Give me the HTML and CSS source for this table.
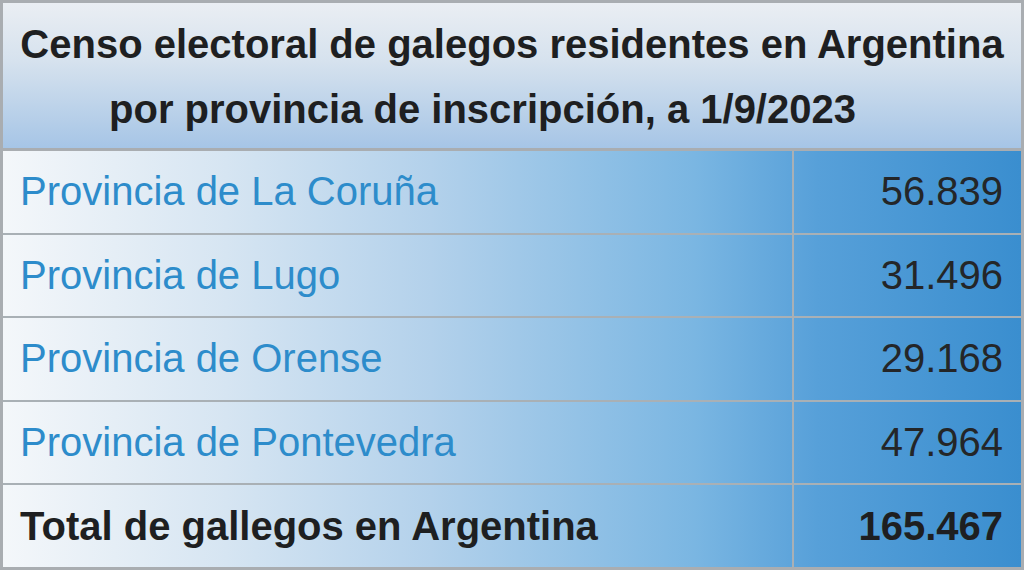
FILE: index.html
```html
<!DOCTYPE html>
<html lang="es">
<head>
<meta charset="utf-8">
<title>Censo electoral de galegos residentes en Argentina</title>
<link rel="stylesheet" href="styles.css">
</head>
<body>
<div class="table">
  <div class="head">
    <div class="title-line">Censo electoral de galegos residentes en Argentina</div>
    <div class="title-line second">por provincia de inscripción, a 1/9/2023</div>
  </div>
  <div class="row">
    <div class="name">Provincia de La Coruña</div>
    <div class="num">56.839</div>
  </div>
  <div class="row">
    <div class="name">Provincia de Lugo</div>
    <div class="num">31.496</div>
  </div>
  <div class="row">
    <div class="name">Provincia de Orense</div>
    <div class="num">29.168</div>
  </div>
  <div class="row">
    <div class="name">Provincia de Pontevedra</div>
    <div class="num">47.964</div>
  </div>
  <div class="row total">
    <div class="name">Total de gallegos en Argentina</div>
    <div class="num">165.467</div>
  </div>
</div>
</body>
</html>
```
FILE: styles.css
```css
html, body {
  margin: 0;
  padding: 0;
  width: 1024px;
  height: 570px;
  overflow: hidden;
  background: #ffffff;
}

.table {
  box-sizing: border-box;
  width: 1024px;
  height: 570px;
  border: 3px solid #a9adb1;
  display: flex;
  flex-direction: column;
  font-family: "Liberation Sans", Arial, sans-serif;
}

.head {
  flex: none;
  height: 148px;
  box-sizing: border-box;
  padding-top: 9px;
  border-bottom: 3px solid #a9adb1;
  background: linear-gradient(to bottom, #eaeef3 0%, #d6e2ee 40%, #a6c5e6 100%);
}

.title-line {
  font-size: 40px;
  font-weight: bold;
  line-height: 65px;
  color: #1e1f21;
  text-align: center;
  white-space: nowrap;
}

.title-line.second {
  padding-right: 59px;
}

.row {
  flex: 1;
  display: grid;
  grid-template-columns: 1fr 229px;
  align-items: stretch;
  background: linear-gradient(to right, #f4f7fa 0%, #d6e5f2 22%, #b3d1eb 42%, #7ab6e2 68%, #57a0d9 80%, #3a8ecf 100%);
}

.row + .row {
  border-top: 2px solid #a9b0b5;
}

.name {
  display: flex;
  align-items: center;
  padding-left: 17px;
  font-size: 40px;
  color: #2d8ccb;
  white-space: nowrap;
}

.num {
  display: flex;
  align-items: center;
  justify-content: flex-end;
  padding-right: 18px;
  border-left: 2px solid #a9b0b5;
  font-size: 40px;
  color: #242628;
}

.total .name {
  font-weight: bold;
  color: #1e1f21;
}

.total .num {
  font-weight: bold;
  color: #1e1f21;
}
```
